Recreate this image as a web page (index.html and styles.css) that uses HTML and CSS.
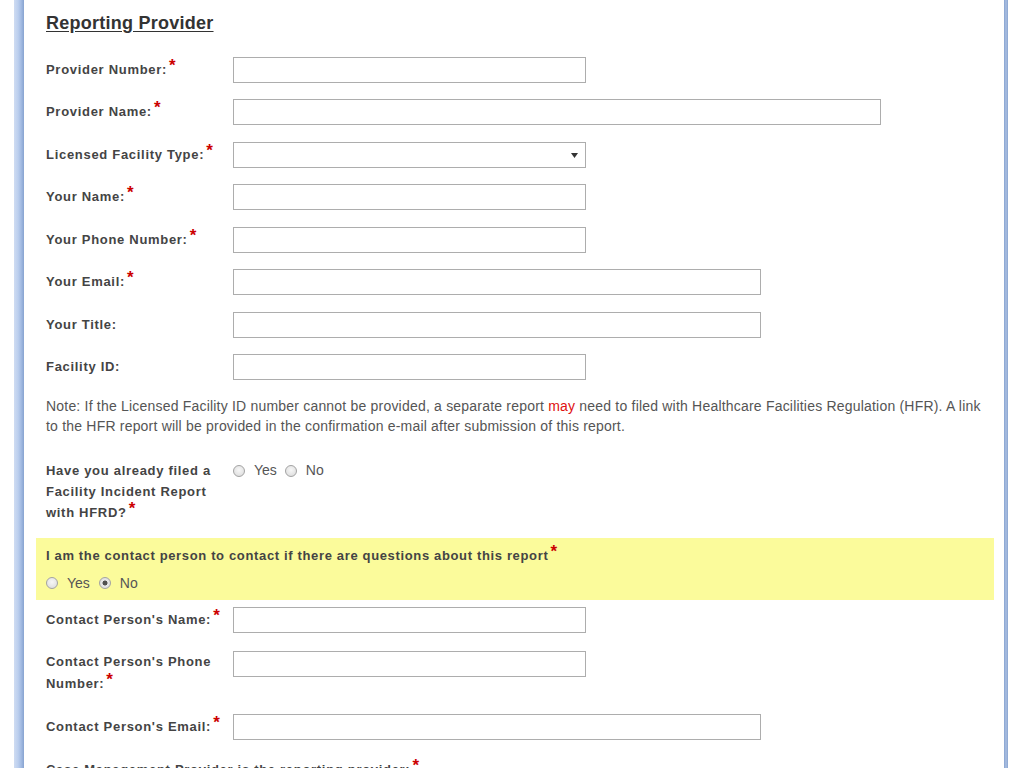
FILE: index.html
```html
<!DOCTYPE html>
<html>
<head>
<meta charset="utf-8">
<title>Reporting Provider</title>
<link rel="stylesheet" href="styles.css">
</head>
<body>
<div class="frame">
  <div class="edge-l"></div>
  <div class="content">
    <h2 class="title">Reporting Provider</h2>

    <div class="row">
      <label class="lbl">Provider Number:<span class="req">*</span></label>
      <input class="field w-md" type="text">
    </div>
    <div class="row">
      <label class="lbl">Provider Name:<span class="req">*</span></label>
      <input class="field w-xl" type="text">
    </div>
    <div class="row">
      <label class="lbl">Licensed Facility Type:<span class="req">*</span></label>
      <div class="select w-md">
        <svg class="arrow" width="7" height="5" viewBox="0 0 7 5"><path d="M0 0h7L3.5 5z" fill="#333"/></svg>
      </div>
    </div>
    <div class="row">
      <label class="lbl">Your Name:<span class="req">*</span></label>
      <input class="field w-md" type="text">
    </div>
    <div class="row">
      <label class="lbl">Your Phone Number:<span class="req">*</span></label>
      <input class="field w-md" type="text">
    </div>
    <div class="row">
      <label class="lbl">Your Email:<span class="req">*</span></label>
      <input class="field w-lg" type="text">
    </div>
    <div class="row">
      <label class="lbl">Your Title:</label>
      <input class="field w-lg" type="text">
    </div>
    <div class="row row-last">
      <label class="lbl">Facility ID:</label>
      <input class="field w-md" type="text">
    </div>

    <p class="note">Note: If the Licensed Facility ID number cannot be provided, a separate report <span class="red">may</span> need to filed with Healthcare Facilities Regulation (HFR). A link to the HFR report will be provided in the confirmation e-mail after submission of this report.</p>

    <div class="row row-q">
      <label class="lbl lbl-multi">Have you already filed a Facility Incident Report with HFRD?<span class="req">*</span></label>
      <div class="radios">
        <span class="radio"></span><span class="rtext">Yes</span>
        <span class="radio"></span><span class="rtext">No</span>
      </div>
    </div>

    <div class="highlight">
      <div class="hl-label">I am the contact person to contact if there are questions about this report<span class="req">*</span></div>
      <div class="radios radios-hl">
        <span class="radio"></span><span class="rtext">Yes</span>
        <span class="radio checked"></span><span class="rtext">No</span>
      </div>
    </div>

    <div class="row row-c1">
      <label class="lbl">Contact Person's Name:<span class="req">*</span></label>
      <input class="field w-md" type="text">
    </div>
    <div class="row row-c2">
      <label class="lbl lbl-multi2">Contact Person's Phone Number:<span class="req">*</span></label>
      <input class="field w-md" type="text">
    </div>
    <div class="row">
      <label class="lbl">Contact Person's Email:<span class="req">*</span></label>
      <input class="field w-lg" type="text">
    </div>
    <div class="row row-full">
      <label class="lbl lbl-full">Case Management Provider is the reporting provider:<span class="req">*</span></label>
    </div>
  </div>
  <div class="edge-r"></div>
</div>
</body>
</html>
```
FILE: styles.css
```css
html, body {
  margin: 0;
  padding: 0;
  background: #ffffff;
  overflow: hidden;
}
body {
  font-family: Arial, "Liberation Sans", sans-serif;
  color: #444;
}
.frame {
  display: flex;
  margin-left: 14px;
  width: 994px;
  min-height: 900px;
}
.edge-l {
  width: 10px;
  flex: none;
  background: linear-gradient(to right, #cfdcf2 0%, #bccfee 40%, #a4bce3 70%, #87a3d0 100%);
}
.edge-r {
  width: 4px;
  flex: none;
  background: linear-gradient(to right, #87a3d0 0%, #aabfe2 50%, #8aa5d0 100%);
}
.content {
  flex: 1;
  padding: 0 10px 0 12px;
}
.title {
  margin: 12px 0 0 10px;
  font-size: 18px;
  line-height: 22px;
  font-weight: bold;
  color: #333;
  text-decoration: underline;
  text-underline-offset: 2px;
  letter-spacing: 0.25px;
}
.row {
  display: flex;
  align-items: flex-start;
  padding-left: 10px;
  margin-bottom: 16.43px;
}
.row-last {
  margin-bottom: 16px;
}
.title + .row {
  margin-top: 23px;
}
.lbl {
  width: 182px;
  margin-right: 5px;
  flex: none;
  font-size: 13px;
  font-weight: bold;
  letter-spacing: 0.7px;
  line-height: 21px;
  padding-top: 2px;
  color: #444;
}
.req {
  color: #c00;
  font-size: 17px;
  position: relative;
  top: -3px;
  line-height: 0;
  margin-left: 2px;
  letter-spacing: 0;
}
.field, .select {
  box-sizing: border-box;
  height: 26px;
  border: 1px solid #adadad;
  background: #fff;
  margin: 0;
  padding: 0 4px;
  font: 13px Arial, "Liberation Sans", sans-serif;
  flex: none;
}
.w-md { width: 353px; }
.w-lg { width: 528px; }
.w-xl { width: 648px; }
.select {
  position: relative;
}
.arrow {
  position: absolute;
  right: 7px;
  top: 10px;
}
.note {
  margin: 13.5px 0 0 10px;
  font-size: 14px;
  line-height: 20px;
  color: #555;
  letter-spacing: 0.2px;
  padding-right: 10px;
}
.red { color: #e01010; }
.row-q {
  margin-top: 24.5px;
  margin-bottom: 0;
}
.lbl-multi {
  width: 175px;
  margin-right: 12px;
  padding-top: 0;
}
.radios {
  display: flex;
  align-items: center;
  font-size: 14px;
  color: #555;
  line-height: 21px;
  padding-left: 0;
}
.radio {
  box-sizing: border-box;
  width: 12px;
  height: 12px;
  border-radius: 50%;
  border: 1px solid #a3a3a3;
  background: radial-gradient(circle at 50% 40%, #f7f7f7 0%, #e2e2e2 70%, #d4d4d4 100%);
  display: inline-block;
  flex: none;
}
.radio.checked {
  background: radial-gradient(circle, #505050 0 2.2px, #e8e8e8 2.8px, #d6d6d6 100%);
}
.rtext {
  margin: 0 8px 0 9px;
}
.highlight {
  background: #fbfb9b;
  margin-top: 15px;
  padding: 7px 10px 7px 10px;
  height: 48px;
}
.hl-label {
  font-size: 13px;
  font-weight: bold;
  letter-spacing: 0.65px;
  line-height: 21px;
  color: #444;
}
.radios-hl {
  padding-left: 0;
  margin-top: 6px;
  line-height: 22px;
}
.radios-hl .rtext {
  margin: 0 9px 0 9px;
}
.row-c1 {
  margin-top: 7px;
  margin-bottom: 18px;
}
.lbl-multi2 {
  line-height: 22px;
  padding-top: 0;
}
.row-c2 {
  margin-bottom: 19px;
}
.row-full {
  margin-top: 0;
}
.lbl-full {
  width: auto;
}
```
